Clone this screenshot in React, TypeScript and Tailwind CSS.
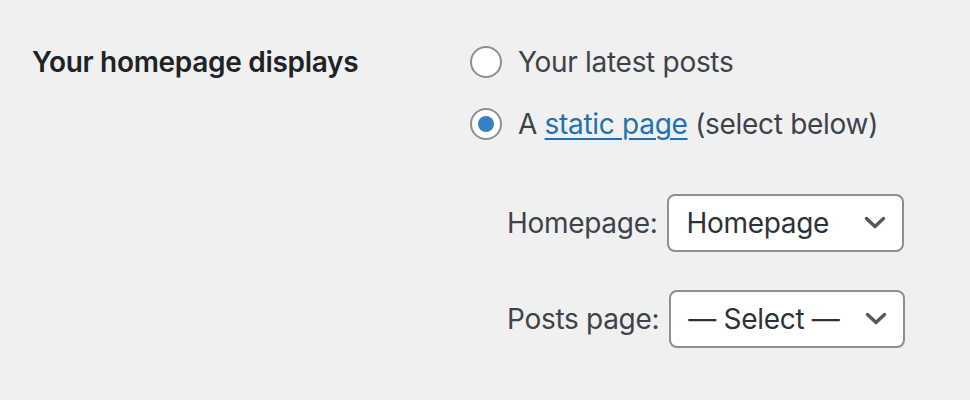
import { useState } from "react";

function Radio({ checked }: { checked: boolean }) {
  return (
    <span className="flex h-8 w-8 shrink-0 items-center justify-center rounded-full border-2 border-[#8c8f94] bg-white">
      {checked && <span className="h-4 w-4 rounded-full bg-[#3582c4]" />}
    </span>
  );
}

function Chevron() {
  return (
    <svg width="22" height="14" viewBox="0 0 22 14" fill="none">
      <path
        d="M2.5 2.5 L11 10.5 L19.5 2.5"
        stroke="#50575e"
        strokeWidth="3.4"
        strokeLinecap="round"
        strokeLinejoin="round"
      />
    </svg>
  );
}

function FakeSelect({ value, width }: { value: string; width: string }) {
  return (
    <div
      className={`flex h-[58px] items-center justify-between rounded-lg border-2 border-[#8c8f94] bg-white pl-[17px] pr-[16px] text-[28px] text-[#2c3338] ${width}`}
    >
      <span>{value}</span>
      <Chevron />
    </div>
  );
}

export default function App() {
  const [choice, setChoice] = useState("page");

  return (
    <div
      className="flex h-[400px] w-[970px] bg-[#f0f0f1] pl-8 pt-[42px] tracking-[-0.3px] text-[#3c434a]"
      style={{ fontFamily: "Inter, 'Noto Sans', sans-serif" }}
    >
      <div className="w-[438px] shrink-0 text-[28px] font-semibold leading-[40px] text-[#1d2327]">
        Your homepage displays
      </div>

      <div className="flex flex-col">
        <label
          className="flex h-10 items-center gap-4 text-[28px]"
          onClick={() => setChoice("posts")}
        >
          <Radio checked={choice === "posts"} />
          <span>Your latest posts</span>
        </label>
        <label
          className="mt-[22px] flex h-10 items-center gap-4 text-[28px]"
          onClick={() => setChoice("page")}
        >
          <Radio checked={choice === "page"} />
          <span>
            A{" "}
            <a
              href="#"
              className="text-[#2271b1] underline decoration-2 underline-offset-4"
            >
              static page
            </a>{" "}
            (select below)
          </span>
        </label>

        <div className="mt-[50px] flex flex-col gap-[38px] pl-[37px]">
          <div className="flex items-center gap-[10px] text-[28px]">
            <span>Homepage:</span>
            <FakeSelect value="Homepage" width="w-[237px]" />
          </div>
          <div className="flex items-center gap-[10px] text-[28px]">
            <span>Posts page:</span>
            <FakeSelect value="— Select —" width="w-[236px]" />
          </div>
        </div>
      </div>
    </div>
  );
}
